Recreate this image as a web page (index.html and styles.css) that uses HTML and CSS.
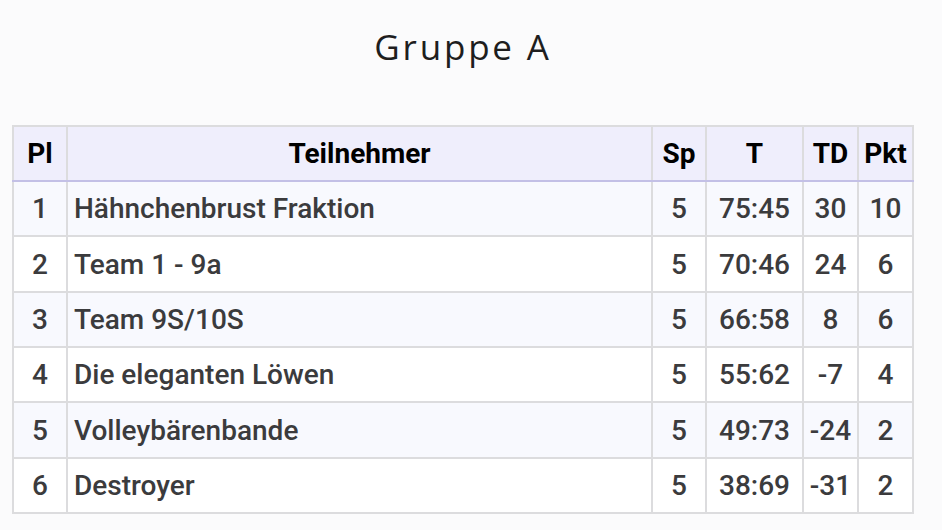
FILE: index.html
```html
<!DOCTYPE html>
<html lang="de">
<head>
<meta charset="utf-8">
<title>Gruppe A</title>
<link rel="stylesheet" href="styles.css">
</head>
<body>
<main class="page">
  <h1 class="title">Gruppe A</h1>
  <table class="standings">
    <thead>
      <tr>
        <th class="c-pl">Pl</th>
        <th class="c-name">Teilnehmer</th>
        <th class="c-sp">Sp</th>
        <th class="c-t">T</th>
        <th class="c-td">TD</th>
        <th class="c-pkt">Pkt</th>
      </tr>
    </thead>
    <tbody>
      <tr><td class="num">1</td><td class="name">Hähnchenbrust Fraktion</td><td class="num">5</td><td class="num">75:45</td><td class="num">30</td><td class="num">10</td></tr>
      <tr><td class="num">2</td><td class="name">Team 1 - 9a</td><td class="num">5</td><td class="num">70:46</td><td class="num">24</td><td class="num">6</td></tr>
      <tr><td class="num">3</td><td class="name">Team 9S/10S</td><td class="num">5</td><td class="num">66:58</td><td class="num">8</td><td class="num">6</td></tr>
      <tr><td class="num">4</td><td class="name">Die eleganten Löwen</td><td class="num">5</td><td class="num">55:62</td><td class="num">-7</td><td class="num">4</td></tr>
      <tr><td class="num">5</td><td class="name">Volleybärenbande</td><td class="num">5</td><td class="num">49:73</td><td class="num">-24</td><td class="num">2</td></tr>
      <tr><td class="num">6</td><td class="name">Destroyer</td><td class="num">5</td><td class="num">38:69</td><td class="num">-31</td><td class="num">2</td></tr>
    </tbody>
  </table>
</main>
</body>
</html>
```

FILE: styles.css
```css
html, body {
  margin: 0;
  padding: 0;
  background: #fbfbfc;
}

.page {
  width: 902px;
  margin: 0 0 0 12px;
  padding-top: 25px;
}

.title {
  margin: 0 0 56px 0;
  text-align: center;
  font-family: "Open Sans", "Noto Sans", sans-serif;
  font-weight: 400;
  font-size: 35px;
  line-height: 44px;
  color: #1e1e1e;
  letter-spacing: 2.8px;
}

.standings {
  width: 902px;
  border-collapse: collapse;
  border: 2px solid #dcdcde;
  font-family: Roboto, "Liberation Sans", sans-serif;
  font-size: 28px;
}

.standings th {
  height: 53px;
  background: #efeefc;
  color: #000;
  font-weight: 700;
  border: 2px solid #dcdcde;
  border-bottom: 2px solid #c3c0e6;
  padding: 0 4px;
  text-align: center;
}

.standings td {
  height: 53.35px;
  border: 2px solid #dcdcde;
  color: #3b3b3d;
  font-weight: 500;
  padding: 0 4px;
}

.standings tbody tr:nth-child(odd) td {
  background: #f8f9fe;
}

.standings tbody tr:nth-child(even) td {
  background: #ffffff;
}

.standings td.num {
  text-align: center;
}

.standings td.name {
  text-align: left;
  padding-left: 6px;
}

.c-pl { width: 44px; }
.c-sp { width: 44px; }
.c-t { width: 87px; }
.c-td { width: 45px; }
.c-pkt { width: 45px; }
```
